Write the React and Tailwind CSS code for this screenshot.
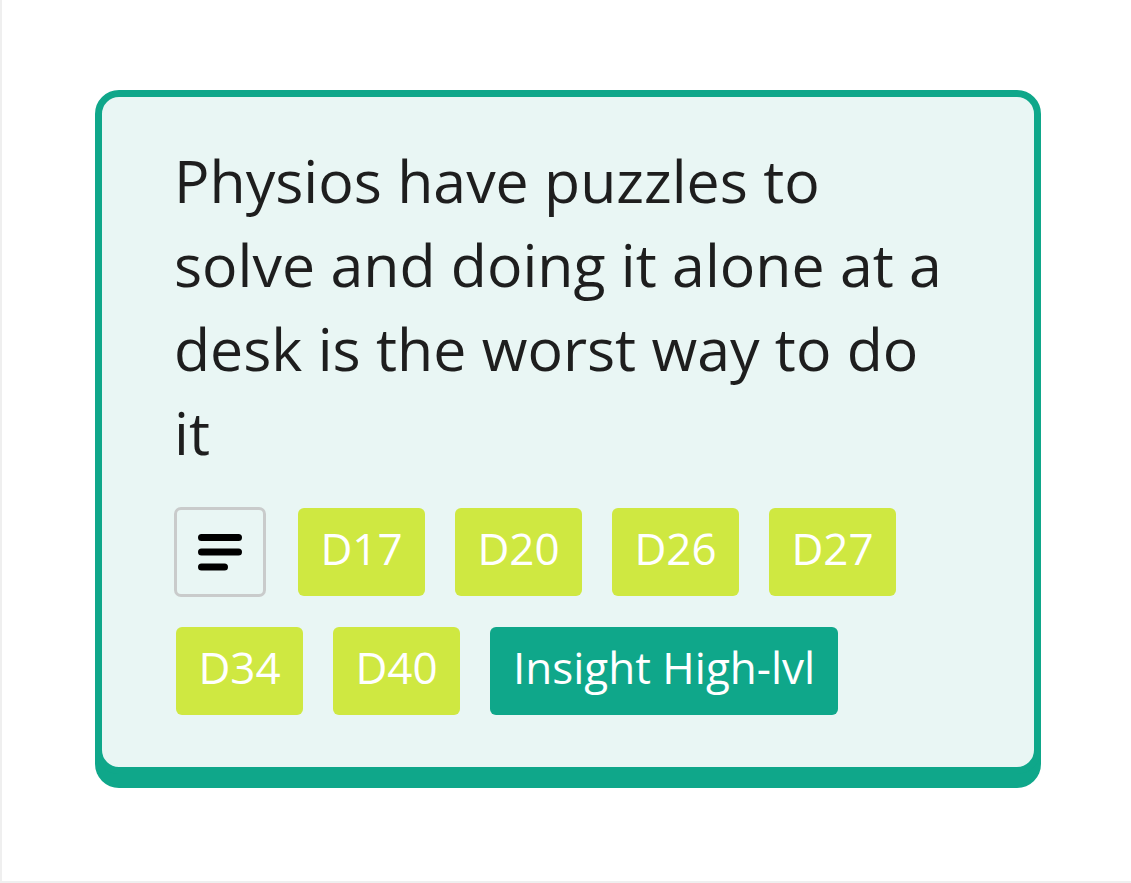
const tags = ['D17', 'D20', 'D26', 'D27', 'D34', 'D40'];

const FilterIcon = () => (
  <svg width="44" height="37" viewBox="0 0 44 37" fill="none">
    <path d="M3.5 3.5h37M3.5 18h37M3.5 33h23" stroke="#000" strokeWidth="7" strokeLinecap="round" />
  </svg>
);

const App = () => {
  return (
    <div
      className="h-[883px] w-full bg-white border-l-2 border-b-2 border-[#efefef] pt-[90px] pl-[93px]"
      style={{ fontFamily: '"Open Sans", "Noto Sans", sans-serif' }}
    >
      <div className="w-[946px] rounded-[24px] border-[7px] border-[#0fa78a] bg-[#e9f6f4] shadow-[0_14px_0_#0fa78a] pt-[41px] pb-[52px] pl-[72px] pr-[72px]">
        <p className="text-[59px] leading-[84px] text-[#1e1e1e] w-[785px]">
          Physios have puzzles to solve and doing it alone at a desk is the worst way to do it
        </p>

        <div className="mt-[33px] flex flex-wrap items-center gap-x-[28px] gap-y-[30px]">
          <button className="mr-[2px] w-[92px] h-[90px] flex items-center justify-center rounded-[7px] border-[3px] border-[#c9cbcb]">
            <FilterIcon />
          </button>
          {tags.map((t) => (
            <span
              key={t}
              className="ml-[2px] w-[127px] h-[88px] pb-[9px] flex items-center justify-center rounded-[6px] bg-[#cfe841] text-white text-[44px]"
            >
              {t}
            </span>
          ))}
          <span className="ml-[2px] h-[88px] px-[23px] pb-[9px] flex items-center rounded-[6px] bg-[#0fa78a] text-white text-[44px]">
            Insight High-lvl
          </span>
        </div>
      </div>
    </div>
  );
};

export default App;
